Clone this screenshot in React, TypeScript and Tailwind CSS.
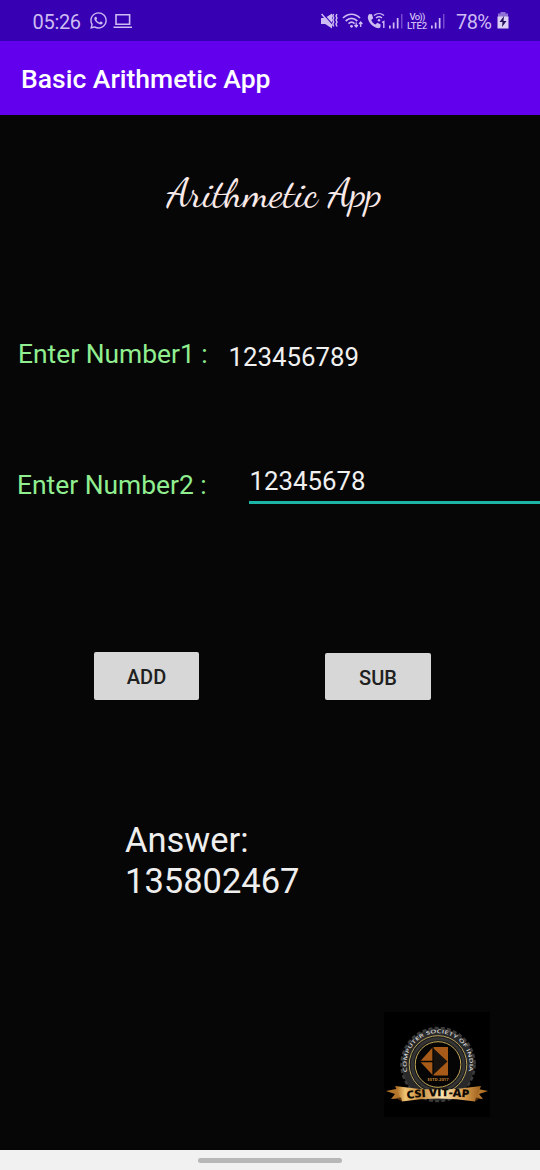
import React from "react";
import { FaWhatsapp } from "react-icons/fa";

function Signal() {
  return (
    <svg width="14" height="16" viewBox="0 0 14 16" fill="currentColor">
      <path d="M0 12.5h1.7v3H0zM3.8 9.5h1.7v6H3.8zM7.8 5h1.7v10.5H7.8z" />
      <path d="M12 1h1.5v14.5H12z" opacity=".4" />
    </svg>
  );
}

function StatusBar() {
  return (
    <div className="flex h-[41px] shrink-0 items-center bg-[#3700b3] pl-[32.5px] text-[#cdbcf2]">
      <span className="w-[56.5px] pt-[2px] text-[20px] leading-[20px] tracking-[-0.3px]">05:26</span>
      <FaWhatsapp className="size-[19px]" />
      <svg className="ml-[5px]" width="20" height="16" viewBox="0 0 20 16" fill="none" stroke="currentColor" strokeWidth="1.6">
        <path d="M3 1.8h13.6v9.4H3zM.5 14.2h18.5" />
      </svg>
      <div className="ml-auto flex items-center pr-[31px]">
        <svg width="18" height="18" viewBox="0 0 18 18" fill="none" stroke="currentColor">
          <path d="M0 6h4L11 1.5v15L4.2 12H0z" fill="currentColor" stroke="none" />
          <path d="M1.8 1.6 12 12.8" stroke="#3700b3" strokeWidth="1.2" />
          <path d="M.6 2.1 11 14" strokeWidth="1.5" />
          <path d="m12.7 2-1 2 1 2-1 2 1 2-1 2 1 2.5M16 2l-1 2 1 2-1 2 1 2-1 2 1 2.5" strokeWidth="1.5" />
        </svg>
        <svg className="ml-[3px]" width="22" height="18" viewBox="0 0 22 18" fill="none" stroke="currentColor" strokeWidth="1.7">
          <path d="M1 6C6 1 13 1 18 6M3.7 9C7.5 5.5 11.5 5.5 15.3 9M6.5 11.6c2-1.7 4.3-1.7 6 0" />
          <circle cx="9.5" cy="14.3" r="1.4" fill="currentColor" stroke="none" />
          <path d="M14.2 10.5v4M12.5 13l1.7 2 1.7-2M18.7 15v-4.5M17 12l1.7-2 1.7 2" strokeWidth="1.3" />
        </svg>
        <svg className="ml-[3px]" width="20" height="18" viewBox="0 0 20 18" fill="none" stroke="currentColor" strokeWidth="1.4">
          <path d="M2.3 2 5 2.2l1.2 4-2 1.7c1 2.2 2.3 3.4 4.2 4.5l2-1.7 3.3 1.8-.3 2.8c-1 1-2.4 1.1-4.2.5C5 14 2 11 1 7 .6 4.7 1 3 2.3 2Z" fill="currentColor" stroke="none" />
          <path d="M7 3.6c3-2.7 7-2.7 10 0M9 6c2-1.6 4.1-1.6 6 0" />
          <circle cx="12" cy="8.3" r="1.2" fill="currentColor" stroke="none" />
          <path d="m15 10.5 1.8-1V16" />
        </svg>
        <div className="ml-[2px]"><Signal /></div>
        <div className="ml-[3px] flex w-[22px] flex-col items-center text-[9.5px] font-medium leading-[9px]">
          <span className="tracking-[-0.7px]">Vo))</span>
          <span className="tracking-[-0.1px]">LTE2</span>
        </div>
        <div className="ml-[3px]"><Signal /></div>
        <span className="ml-[11px] w-[38px] whitespace-nowrap pt-[2px] text-[20px] leading-[20px] tracking-[-0.6px]">78%</span>
        <svg className="ml-[3px]" width="12" height="17" viewBox="0 0 12 17">
          <path d="M3.5 0h5v2h-5z" fill="#8f70d4" />
          <path d="M1 1.5h10V6H1z" fill="#8f70d4" />
          <path d="M.5 4.5h11v12H.5z" fill="#ddd0f5" />
          <path d="M7 4 2.5 10h3L5 15l4.5-6h-3z" fill="#24105d" />
        </svg>
      </div>
    </div>
  );
}

function Badge() {
  return (
    <svg className="bg-black" width="106" height="105" viewBox="0 0 106 105">
      <defs>
        <linearGradient id="gold" x1="0" x2="1">
          <stop offset="0" stopColor="#a86518" />
          <stop offset=".12" stopColor="#efc475" />
          <stop offset=".3" stopColor="#c98a3a" />
          <stop offset=".55" stopColor="#fae3ae" />
          <stop offset=".82" stopColor="#d59848" />
          <stop offset="1" stopColor="#9b5f1d" />
        </linearGradient>
        <path id="ring" d="M23.4 60A31.5 31.5 0 1 1 84.6 60" />
      </defs>
      <circle cx="54" cy="52.5" r="36.3" fill="#2d2d2d" stroke="#3b3b3b" strokeWidth="3" strokeDasharray="4 2.2" />
      <circle cx="54" cy="52.5" r="35.5" fill="#29292a" />
      <circle cx="54" cy="52.5" r="28.8" fill="#171717" stroke="#b7a35d" strokeWidth="1" />
      <circle cx="54" cy="52.5" r="25.8" fill="none" stroke="#343434" strokeWidth="3" />
      <circle cx="54" cy="52.5" r="22.8" fill="#050505" stroke="#c4ab57" strokeWidth="1" />
      <text className="font-['Open_Sans'] font-semibold" fontSize="5" fill="#d5d5d5">
        <textPath href="#ring" textLength="113" lengthAdjust="spacingAndGlyphs">COMPUTER SOCIETY OF INDIA</textPath>
      </text>
      <path d="M36 49.5 49 35h15v28.5H49z" fill="#a85b18" />
      <path d="m49 36 14.5 13.5L49 63z" fill="#17120e" />
      <path d="M36 49.5h13M49 35v28.5" fill="none" stroke="#080706" strokeWidth="1.3" />
      <text className="font-['Open_Sans'] font-bold" x="54" y="69" fontSize="4" textLength="21" textAnchor="middle" fill="#c98532">ESTD.2017</text>
      <path d="m2 79 15-3 4 10-14 1 4-5zM104 79l-15-3-4 10 14 1-4-5z" fill="#b5762c" />
      <path d="M11 74q43 7 86 0l-6 15.5q-37-6-73 0z" fill="url(#gold)" />
      <path d="m12 86 6 3.5-1-4zM96 86l-5 3.5 1-4z" fill="#5a320d" />
      <path id="ribbon" d="M23 87q31-5 63-1" fill="none" />
      <text className="font-['Open_Sans'] font-extrabold" fontSize="11" fill="#100b05">
        <textPath href="#ribbon" textLength="62" lengthAdjust="spacingAndGlyphs">CSI VIT-AP</textPath>
      </text>
    </svg>
  );
}

export default function App() {
  return (
    <div className="flex h-[1170px] w-[540px] flex-col overflow-hidden bg-[#060606] font-[Roboto,sans-serif]">
      <StatusBar />
      <header className="flex h-[74px] shrink-0 items-center bg-[#6200ee] pl-[21px] pt-[2px] text-[26.5px] font-medium text-white">
        <h1>Basic Arithmetic App</h1>
      </header>
      <main className="flex grow flex-col">
        <h2 className="mt-[53px] h-[52px] whitespace-nowrap pl-[167px] font-['Dancing_Script','Liberation_Serif',cursive] text-[40.5px] leading-[50px] text-[#f9e9e9]">
          Arithmetic App
        </h2>
        <div className="mt-[118px] flex h-[42px] items-start">
          <label className="w-[213px] whitespace-nowrap pl-[18px] text-[26.4px] leading-[32px] text-[#90ee90]">Enter Number1 :</label>
          <div className="h-[40px] w-[291px] pl-[15.5px] text-[25.8px] leading-[39px] text-[#f0f0f0]">123456789</div>
        </div>
        <div className="mt-[82px] flex h-[42px] items-start">
          <label className="w-[249px] whitespace-nowrap pl-[17px] pt-[7px] text-[26.4px] leading-[32px] text-[#90ee90]">Enter Number2 :</label>
          <div className="h-[42px] grow border-b-[3px] border-[#1cb5a5] pl-[0.5px] text-[25.8px] leading-[39px] text-[#f0f0f0]">12345678</div>
        </div>
        <div className="mt-[148px] flex gap-[126px] pl-[94px] text-[20px] font-medium text-[#202020]">
          <button className="h-[48px] w-[105px] rounded-[2px] bg-[#d6d7d6] pt-[2px]">ADD</button>
          <button className="mt-[1px] h-[47px] w-[106px] rounded-[2px] bg-[#d6d7d6] pt-[2px]">SUB</button>
        </div>
        <div className="mt-[120px] pl-[125px] text-[34.5px] leading-[41px] text-[#eeeeee]">
          <p>Answer:</p>
          <p>135802467</p>
        </div>
        <div className="mt-[110px] pl-[384px]">
          <Badge />
        </div>
      </main>
      <footer className="flex h-[20px] shrink-0 justify-center bg-[#f1f1f1] pt-[8px]">
        <div className="h-[5px] w-[144px] rounded-full bg-[#b7b7b7]" />
      </footer>
    </div>
  );
}
